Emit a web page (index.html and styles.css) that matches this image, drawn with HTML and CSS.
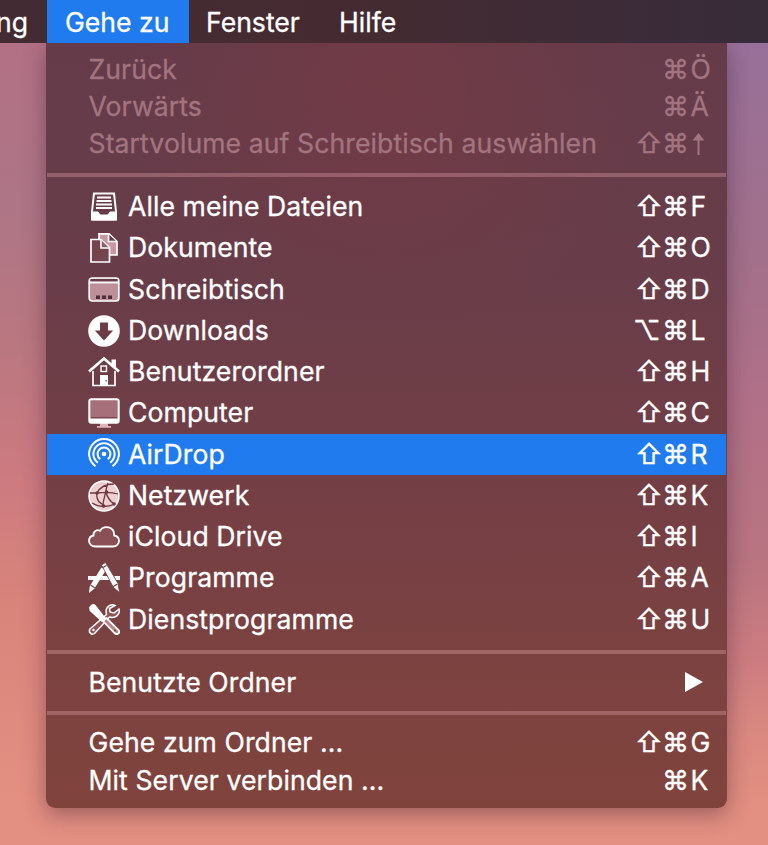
FILE: index.html
```
<!DOCTYPE html>
<html lang="de">
<head>
	<meta charset="utf-8">
	<title>Gehe zu</title>
	<link rel="stylesheet" href="styles.css">
</head>
<body>

<!-- Menüleiste -->
<nav class="menubar">
	<span class="cut">ng</span>
	<span class="on">Gehe zu</span>
	<span class="fenster">Fenster</span>
	<span class="hilfe">Hilfe</span>
</nav>

<!-- Menü "Gehe zu" -->
<div class="menu">
	<ul class="off">
		<li><span class="name">Zurück</span><span class="keys"><i></i><i>⌘</i><b>Ö</b></span></li>
		<li><span class="name">Vorwärts</span><span class="keys"><i></i><i>⌘</i><b>Ä</b></span></li>
		<li><span class="name">Startvolume auf Schreibtisch auswählen</span><span class="keys"><i>⇧</i><i>⌘</i><svg class="up" viewBox="0 0 12 22"><path d="M6 0l6 7.500H7V22H5V7.500H0z" fill="currentColor"/></svg></span></li>
	</ul>
	<hr>
	<ul class="places">
		<li>
			<svg viewBox="0 0 32 32"><path d="M6 2.500h20l2 18v8H4v-8z" fill="none" stroke="#fff" stroke-width="2"/><path d="M4 21h6l2 3h8l2-3h6v8H4z" fill="#fff" stroke="#fff"/><path d="M9 6.500h14M8.500 10h15M8 13.500h16M8 17h16" stroke="#fff" stroke-width="1.800"/></svg>
			<span class="name">Alle meine Dateien</span><span class="keys"><i>⇧</i><i>⌘</i><b>F</b></span>
		</li>
		<li>
			<svg viewBox="0 0 32 32"><path d="M11 8V1.800h10L29 9.500V23h-8" fill="#c798a1" stroke="#fff" stroke-width="1.700"/><path d="M20.500 2v7.500h8" fill="#673c48" stroke="#fff" stroke-width="1.700"/><path d="M3 7.500h10l8.500 8V30H3z" fill="#74454f" stroke="#fff" stroke-width="1.700"/><path d="M13 8v8h8" fill="#8a5963" stroke="#fff" stroke-width="1.600"/></svg>
			<span class="name">Dokumente</span><span class="keys"><i>⇧</i><i>⌘</i><b>O</b></span>
		</li>
		<li>
			<svg viewBox="0 0 32 32"><rect x="1.200" y="5" width="29.600" height="23" rx="3" fill="#bd8f98" stroke="#fff" stroke-width="1.700"/><path d="M2.500 6h27v2.500h-27z" fill="#673c48"/><path d="M1 9.500h30" stroke="#fff" stroke-width="1.800"/><path d="M8 22.500h4v3.500H8zM14 22.500h4v3.500h-4zM20 22.500h4v3.500h-4z" fill="#532d38"/></svg>
			<span class="name">Schreibtisch</span><span class="keys"><i>⇧</i><i>⌘</i><b>D</b></span>
		</li>
		<li>
			<svg viewBox="0 0 32 32"><circle cx="16" cy="16" r="15.800" fill="#fff"/><path d="M12 7.500h8v8h5.200L16 25.500 6.800 15.500H12z" fill="#6c3d47"/></svg>
			<span class="name">Downloads</span><span class="keys"><i class="alt">⌥</i><i>⌘</i><b>L</b></span>
		</li>
		<li>
			<svg viewBox="0 0 32 32"><path d="M5 15v14.500h22V15" fill="none" stroke="#fff" stroke-width="1.700"/><path d="M1 15.500 16 2.500l15 13" fill="none" stroke="#fff" stroke-width="2.800"/><path d="M23.500 3.500H28v10l-4.500-4z" fill="#fff"/><rect x="13" y="10" width="5.500" height="5.500" fill="none" stroke="#fff" stroke-width="1.400"/><path d="M12 19h8v11h-8z" fill="#fff"/><path d="M17.500 24h1.200v1.500h-1.200z" fill="#6c3d47"/></svg>
			<span class="name">Benutzerordner</span><span class="keys"><i>⇧</i><i>⌘</i><b>H</b></span>
		</li>
		<li>
			<svg viewBox="0 0 32 32"><path d="M12 26h8v3h3v1.700H9V29h3z" fill="#dfb5bb"/><rect x="1.300" y="2.300" width="29.400" height="23.500" rx="2" fill="#a66f79" stroke="#fff" stroke-width="2"/><path d="M1.500 21.500h29V26h-29z" fill="#fff"/><path d="M3 20.700h26" stroke="#71404a" stroke-width="1"/></svg>
			<span class="name">Computer</span><span class="keys"><i>⇧</i><i>⌘</i><b>C</b></span>
		</li>
		<li class="on">
			<svg viewBox="0 0 32 32" fill="none" stroke="#fff" stroke-width="2"><path d="M7.500 28.200a14.900 14.900 0 1 1 17 0"/><path d="M9.900 24.600a10.600 10.600 0 1 1 12.200 0"/><path d="M12.200 21.100a6.400 6.400 0 1 1 7.600 0"/><circle cx="16" cy="16" r="2.300" fill="#fff" stroke="none"/></svg>
			<span class="name">AirDrop</span><span class="keys"><i>⇧</i><i>⌘</i><b>R</b></span>
		</li>
		<li>
			<svg viewBox="0 0 32 32"><circle cx="16" cy="16" r="15" fill="#f0cfd0" stroke="#fff" stroke-width="1.500"/><g fill="none" stroke="#6d3a42" stroke-width="1.300"><path d="M9 13C12 7 18 4 26 4M9 13c-1 6 2 10 7 12M9 13c7-1 15-1 21 1M20 3c-1 3-2 5-2 8-1 5-3 9-3 15M18 12c1 5 4 9 8 12M4 23c8 5 16 4 23 1M2 13l7 0"/></g><g fill="#6d3a42"><circle cx="9" cy="13" r="1.800"/><circle cx="18.500" cy="12" r="1.800"/><circle cx="15.500" cy="26" r="1.800"/><circle cx="26" cy="24" r="1.800"/></g></svg>
			<span class="name">Netzwerk</span><span class="keys"><i>⇧</i><i>⌘</i><b>K</b></span>
		</li>
		<li>
			<svg viewBox="0 0 32 32"><path d="M7.500 25.500C3.500 25.500 1 23 1 20s2-5 4.500-5.500C5 10.500 9 8 12 9.800 16 3.500 26.500 5.500 26.200 14.500 29 15 31 17 31 20s-2.500 5.500-6 5.500z" fill="#8a5055" stroke="#fff" stroke-width="1.800"/></svg>
			<span class="name">iCloud Drive</span><span class="keys"><i>⇧</i><i>⌘</i><b>I</b></span>
		</li>
		<li>
			<svg viewBox="0 0 32 32"><path d="M0 14h9l-2.500 4H0zM14 14h5l2.500 4h-10zM26 14h6v4h-4z" fill="#fff"/><path d="m13.500 5.500 4.500 2.500L6.500 26.500 1 31l.8-7z" fill="#fff"/><path d="m13.500 3 4-2.500L30 21.500l1.500 9-6-5z" fill="#fff" stroke="#78414a" stroke-width=".8"/><path d="m2.500 23 4.500 3M24.500 25l5-3M15 5.500l3.500-2" stroke="#78414a" stroke-width="1.200"/></svg>
			<span class="name">Programme</span><span class="keys"><i>⇧</i><i>⌘</i><b>A</b></span>
		</li>
		<li>
			<svg viewBox="0 0 32 32"><path d="M27 2.500c-4-2-9 1-9 6l.5 3L2 26c-2 3 1.500 6.500 4.500 4.500L21.500 14c6 2 11-3 9.500-8l-5 4-4-1-.5-3.500z" fill="#925454" stroke="#fff" stroke-width="1.500"/><circle cx="5.500" cy="27" r="1.200" fill="#fff"/><path d="M1 4.500C3 1 5.500 0 7.500 2L18 15.500 14 19 1.800 8z" fill="#fff"/><path d="m15 18 3.500-3 12 12c2 2.500-1 5.500-3.500 3.500z" fill="#bd8380" stroke="#fff" stroke-width="1.800"/><circle cx="27" cy="27.500" r="1" fill="#78414a"/></svg>
			<span class="name">Dienstprogramme</span><span class="keys"><i>⇧</i><i>⌘</i><b>U</b></span>
		</li>
	</ul>
	<hr>
	<ul>
		<li><span class="name">Benutzte Ordner</span><svg class="more" viewBox="0 0 18 20"><path d="M0 0v20l18-10z" fill="#fff"/></svg></li>
	</ul>
	<hr>
	<ul>
		<li><span class="name">Gehe zum Ordner ...</span><span class="keys"><i>⇧</i><i>⌘</i><b>G</b></span></li>
		<li><span class="name">Mit Server verbinden ...</span><span class="keys"><i></i><i>⌘</i><b>K</b></span></li>
	</ul>
</div>

</body>
</html>
```
FILE: styles.css
```
* { margin:0px; padding:0px; box-sizing:border-box;}
body { height:845px; overflow:hidden; font:26.6px/37.3px "Inter", "DejaVu Sans", sans-serif; color:#fff;
	background:linear-gradient(#97709a 4%, #a2708a 30%, #b07088 47%, #b87480 66%, #cc7c80 78%, #d98880 86%, #e38f81 95%) right top/384px 100% no-repeat, linear-gradient(#b37085 4%, #ad7586 24%, #b97780 40%, #cd7a80 57%, #d8847b 71%, #e38f81 95%);}
ul { list-style:none;}

/* Menüleiste */
.menubar { display:flex; height:43px; line-height:44px; -webkit-text-stroke:0.3px; background:linear-gradient(to right, #432b33, #452b31 45%, #3b2b38 85%, #372c38);}
.menubar span { white-space:nowrap;}
.cut { width:47px; text-indent:-4px;}
.menubar .on { width:142px; padding-left:18px; background:#207bef;}
.fenster { width:132px; padding-left:17px;}
.hilfe { padding-left:18px;}

/* Menü */
.menu { width:681px; height:765px; margin-left:46px; padding-top:7.700px; border-radius:0 0 9px 9px; -webkit-text-stroke:0.3px; box-shadow:0 6px 22px rgba(60,30,50,0.45);
	background:radial-gradient(ellipse 260px 260px at 340px 40px, rgba(120,58,66,0.6), rgba(120,58,66,0)), linear-gradient(#653b4a 0%, #683d49 30%, #753f44 62%, #7e433f 88%, #80433c 100%);}
.menubar { position:relative; z-index:1;}
.menu li { display:flex; align-items:center; height:37.3px; padding:0 14px 0 42.500px; white-space:nowrap;}
.menu .name { flex:1; letter-spacing:0.08px;}
.menu hr { height:4px; margin:10px 1px 9.500px 1px; border:0; background:rgba(225,160,170,0.36);}

.keys { display:grid; grid-template-columns:27px 27px 22px; align-items:center;}
.keys i { margin-left:-2px; font-style:normal; font-size:27px;}
.keys .alt { margin-left:-4px;}
.keys b { margin-left:-0.5px; font-weight:normal;}
.up { width:13px; height:22px; margin-left:1px;}
.off li { color:#a27480;}

.places li { height:41.27px; padding-left:42px;}
.places svg { width:32px; height:32px; margin-right:8px;}
.places .on { background:#207bef; margin:0 1px; padding-left:41px; padding-right:13px;}
.menu .more { width:18px; height:20px; margin-right:10px;}
```
